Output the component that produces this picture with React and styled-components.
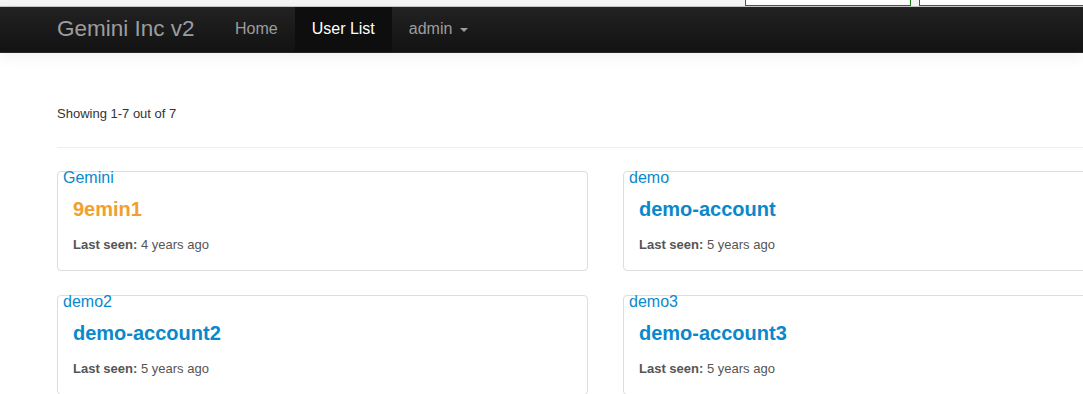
import React from "react";
import styled, { createGlobalStyle } from "styled-components";

const GlobalStyle = createGlobalStyle`
  html, body {
    margin: 0;
    padding: 0;
    background: #fff;
    overflow: hidden;
    font-family: "Liberation Sans", Arial, Helvetica, sans-serif;
  }
`;

const TopStrip = styled.div`
  display: flex;
  align-items: flex-end;
  gap: 8px;
  height: 6px;
  padding-left: 745px;
  background: #f5f5f5;
  border-bottom: 1px solid #c8c8c8;
  overflow: hidden;
`;

const FieldBox = styled.div`
  flex: none;
  width: ${(p) => p.width}px;
  height: 20px;
  background: #fff;
  border: 1px solid #1a7a1a;
  box-sizing: border-box;
`;

const NavWrapper = styled.nav`
  position: relative;
  z-index: 2;
  height: 45px;
  background: linear-gradient(to bottom, #222 0%, #121212 100%);
  border-bottom: 1px solid #262626;
  box-shadow: 0 3px 14px rgba(0, 0, 0, 0.07);

  .nav-inner {
    display: flex;
    align-items: stretch;
    height: 100%;
    padding-left: 57px;
  }
`;

const Brand = styled.a`
  flex: none;
  display: flex;
  align-items: center;
  width: 161px;
  font-size: 22.5px;
  color: #9d9d9d;
  text-decoration: none;
  padding-bottom: 1px;
`;

const NavItem = styled.a`
  display: flex;
  align-items: center;
  gap: 8px;
  padding: 0 17px 1px;
  font-size: 16px;
  text-decoration: none;
  color: ${(p) => (p.active ? "#fff" : "#9d9d9d")};
  background: ${(p) => (p.active ? "#0e0e0e" : "transparent")};
`;

const Caret = styled.span`
  display: inline-block;
  width: 0;
  height: 0;
  margin-top: 2px;
  border-top: 4px solid #9d9d9d;
  border-left: 4px solid transparent;
  border-right: 4px solid transparent;
`;

const Main = styled.main`
  width: 1170px;
  padding: 52px 0 0 57px;
`;

const Summary = styled.p`
  margin: 0;
  font-size: 13px;
  line-height: 18px;
  color: #333;
`;

const Divider = styled.hr`
  margin: 24px 0 23px;
  border: 0;
  border-top: 1px solid #eee;
`;

const CardGrid = styled.div`
  display: grid;
  grid-template-columns: 531px 531px;
  column-gap: 35px;
  row-gap: 24px;
`;

const Card = styled.div`
  box-sizing: border-box;
  height: 100px;
  padding: 0 15px;
  border: 1px solid #ddd;
  border-radius: 4px;
  background: #fff;
`;

const Group = styled.div`
  margin: -2px 0 0 -10px;
  font-size: 16px;
  line-height: 16px;
  color: #0a88cc;
`;

const UserName = styled.a`
  display: block;
  margin-top: 12px;
  font-size: 20px;
  line-height: 22px;
  font-weight: bold;
  text-decoration: none;
  color: ${(p) => (p.highlight ? "#f0a030" : "#0a88cc")};
`;

const LastSeen = styled.div`
  margin-top: 16px;
  font-size: 13px;
  line-height: 18px;
  color: #555;

  b {
    color: #555;
  }
`;

const users = [
  { group: "Gemini", name: "9emin1", seen: "4 years ago", highlight: true },
  { group: "demo", name: "demo-account", seen: "5 years ago" },
  { group: "demo2", name: "demo-account2", seen: "5 years ago" },
  { group: "demo3", name: "demo-account3", seen: "5 years ago" },
];

function App() {
  return (
    <>
      <GlobalStyle />
      <TopStrip>
        <FieldBox width={166} />
        <FieldBox width={200} />
      </TopStrip>
      <NavWrapper>
        <div className="nav-inner">
          <Brand href="#">Gemini Inc v2</Brand>
          <NavItem href="#">Home</NavItem>
          <NavItem href="#" active>
            User List
          </NavItem>
          <NavItem href="#">
            admin <Caret />
          </NavItem>
        </div>
      </NavWrapper>
      <Main>
        <Summary>Showing 1-7 out of 7</Summary>
        <Divider />
        <CardGrid>
          {users.map((u) => (
            <Card key={u.name}>
              <Group>{u.group}</Group>
              <UserName href="#" highlight={u.highlight}>
                {u.name}
              </UserName>
              <LastSeen>
                <b>Last seen:</b> {u.seen}
              </LastSeen>
            </Card>
          ))}
        </CardGrid>
      </Main>
    </>
  );
}

export default App;
